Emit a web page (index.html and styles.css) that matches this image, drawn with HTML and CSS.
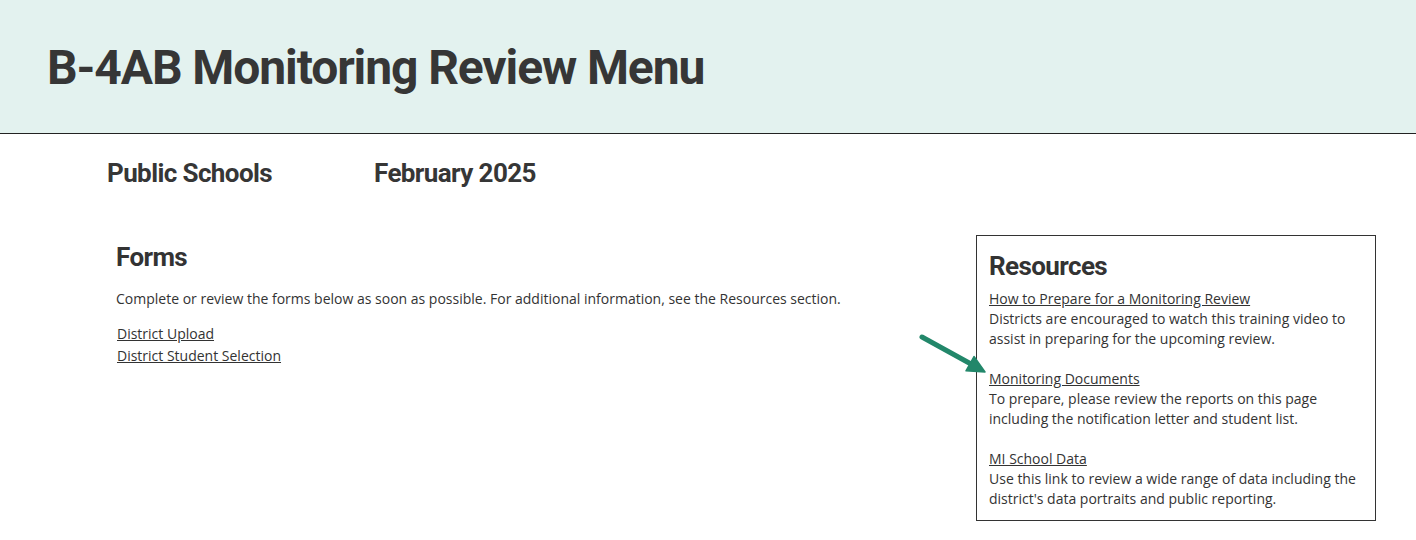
FILE: index.html
```html
<!DOCTYPE html>
<html lang="en">
<head>
<meta charset="utf-8">
<title>B-4AB Monitoring Review Menu</title>
<link rel="stylesheet" href="styles.css">
</head>
<body>
<header class="page-header">
  <h1 class="page-title">B-4AB Monitoring Review Menu</h1>
</header>
<div class="meta">
  <div class="meta-item">Public Schools</div>
  <div class="meta-item">February 2025</div>
</div>
<main class="content">
  <section class="forms">
    <h2 class="section-title">Forms</h2>
    <p class="intro">Complete or review the forms below as soon as possible. For additional information, see the Resources section.</p>
    <p class="form-links">
      <a href="#">District Upload</a><br>
      <a href="#">District Student Selection</a>
    </p>
  </section>
  <aside class="resources">
    <h2 class="section-title">Resources</h2>
    <p class="resource"><a href="#">How to Prepare for a Monitoring Review</a><br>Districts are encouraged to watch this training video to assist in preparing for the upcoming review.</p>
    <p class="resource"><a href="#">Monitoring Documents</a><br>To prepare, please review the reports on this page including the notification letter and student list.</p>
    <p class="resource"><a href="#">MI School Data</a><br>Use this link to review a wide range of data including the district's data portraits and public reporting.</p>
  </aside>
  <svg class="pointer" width="80" height="52" viewBox="0 0 80 52" aria-hidden="true">
    <line x1="7" y1="8" x2="56" y2="35" stroke="#22876a" stroke-width="5" stroke-linecap="round"/>
    <polygon points="70,43 59,27.5 51,41.8" fill="#22876a" stroke="#22876a" stroke-width="1.5" stroke-linejoin="round"/>
  </svg>
</main>
</body>
</html>
```

FILE: styles.css
```css
html, body {
  margin: 0;
  padding: 0;
  background: #ffffff;
}

body {
  color: #333333;
  font-family: "Open Sans", "Liberation Sans", sans-serif;
  font-size: 14px;
}

.page-header {
  height: 133px;
  box-sizing: content-box;
  background: #e3f2ef;
  border-bottom: 1px solid #222222;
}

.page-title {
  margin: 0;
  padding: 39px 0 0 47px;
  font-family: Roboto, "Liberation Sans", sans-serif;
  font-weight: 700;
  font-size: 48px;
  line-height: 1.2;
  letter-spacing: -1.1px;
  color: #363636;
}

.meta {
  display: grid;
  grid-template-columns: 267px auto;
  padding-left: 107px;
  margin-top: 24px;
}

.meta-item {
  font-family: Roboto, "Liberation Sans", sans-serif;
  font-weight: 700;
  font-size: 26px;
  line-height: 1.2;
  letter-spacing: -0.6px;
  color: #363636;
}

.content {
  position: relative;
  display: flex;
  align-items: flex-start;
  margin-top: 46px;
  padding-left: 116px;
}

.forms {
  width: 860px;
  padding-top: 7px;
}

.section-title {
  margin: 0;
  font-family: Roboto, "Liberation Sans", sans-serif;
  font-weight: 700;
  font-size: 26px;
  line-height: 1.2;
  letter-spacing: -0.6px;
  color: #333333;
}

.forms .section-title {
  margin-bottom: 15px;
}

.intro {
  margin: 0 0 13px;
  line-height: 22px;
}

.form-links {
  margin: 0;
  padding-left: 1px;
  line-height: 22px;
}

a {
  color: #333333;
  text-decoration: underline;
}

.resources {
  width: 400px;
  box-sizing: border-box;
  border: 1px solid #333333;
  padding: 15px 12px 11px;
}

.resources .section-title {
  margin-bottom: 7px;
}

.resource {
  margin: 0 0 20px;
  line-height: 20px;
}

.resource:last-child {
  margin-bottom: 0;
}

.pointer {
  position: absolute;
  left: 915px;
  top: 94px;
}
```
